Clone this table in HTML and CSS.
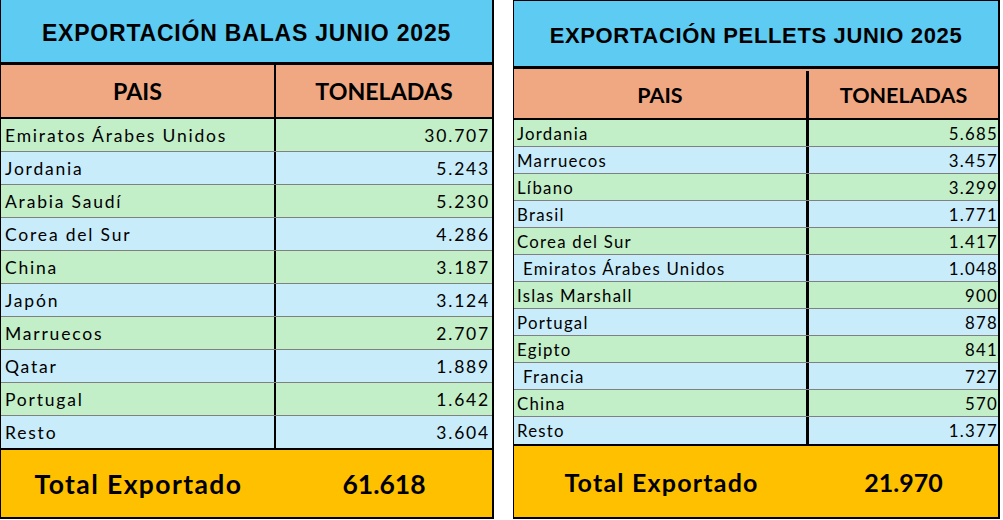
FILE: index.html
```html
<!DOCTYPE html>
<html lang="es">
<head>
<meta charset="utf-8">
<title>Exportación Junio 2025</title>
<link rel="stylesheet" href="styles.css">
</head>
<body>
<div class="page">
  <section class="sheet sheet-balas">
    <div class="title">EXPORTACIÓN BALAS JUNIO 2025</div>
    <div class="head">
      <div class="cell c1">PAIS</div>
      <div class="cell c2">TONELADAS</div>
    </div>
    <div class="body">
      <div class="row g"><div class="cell c1">Emiratos Árabes Unidos</div><div class="cell c2">30.707</div></div>
      <div class="row b"><div class="cell c1">Jordania</div><div class="cell c2">5.243</div></div>
      <div class="row g"><div class="cell c1">Arabia Saudí</div><div class="cell c2">5.230</div></div>
      <div class="row b"><div class="cell c1">Corea del Sur</div><div class="cell c2">4.286</div></div>
      <div class="row g"><div class="cell c1">China</div><div class="cell c2">3.187</div></div>
      <div class="row b"><div class="cell c1">Japón</div><div class="cell c2">3.124</div></div>
      <div class="row g"><div class="cell c1">Marruecos</div><div class="cell c2">2.707</div></div>
      <div class="row b"><div class="cell c1">Qatar</div><div class="cell c2">1.889</div></div>
      <div class="row g"><div class="cell c1">Portugal</div><div class="cell c2">1.642</div></div>
      <div class="row b"><div class="cell c1">Resto</div><div class="cell c2">3.604</div></div>
    </div>
    <div class="total">
      <div class="cell c1 label">Total Exportado</div>
      <div class="cell c2">61.618</div>
    </div>
  </section>

  <section class="sheet sheet-pellets">
    <div class="title">EXPORTACIÓN PELLETS JUNIO 2025</div>
    <div class="head">
      <div class="cell c1">PAIS</div>
      <div class="cell c2">TONELADAS</div>
    </div>
    <div class="body">
      <div class="row g"><div class="cell c1">Jordania</div><div class="cell c2">5.685</div></div>
      <div class="row b"><div class="cell c1">Marruecos</div><div class="cell c2">3.457</div></div>
      <div class="row g"><div class="cell c1">Líbano</div><div class="cell c2">3.299</div></div>
      <div class="row b"><div class="cell c1">Brasil</div><div class="cell c2">1.771</div></div>
      <div class="row g"><div class="cell c1">Corea del Sur</div><div class="cell c2">1.417</div></div>
      <div class="row b"><div class="cell c1 indent">Emiratos Árabes Unidos</div><div class="cell c2">1.048</div></div>
      <div class="row g"><div class="cell c1">Islas Marshall</div><div class="cell c2">900</div></div>
      <div class="row b"><div class="cell c1">Portugal</div><div class="cell c2">878</div></div>
      <div class="row g"><div class="cell c1">Egipto</div><div class="cell c2">841</div></div>
      <div class="row b"><div class="cell c1 indent">Francia</div><div class="cell c2">727</div></div>
      <div class="row g"><div class="cell c1">China</div><div class="cell c2">570</div></div>
      <div class="row b"><div class="cell c1">Resto</div><div class="cell c2">1.377</div></div>
    </div>
    <div class="total">
      <div class="cell c1 label">Total Exportado</div>
      <div class="cell c2">21.970</div>
    </div>
  </section>
</div>
</body>
</html>
```

FILE: styles.css
```css
* { box-sizing: border-box; }

html, body {
  margin: 0;
  padding: 0;
  background: #ffffff;
}

body {
  font-family: Lato, "Open Sans", sans-serif;
  color: #000;
}

.page {
  display: flex;
  gap: 19px;
  align-items: flex-start;
  width: 1003px;
  height: 520px;
}

.sheet {
  display: flex;
  flex-direction: column;
  border-left: 1px solid #000;
  border-right: 2px solid #000;
  border-bottom: 2px solid #000;
}

.sheet-balas { width: 494px; }
.sheet-pellets { width: 487px; border-top: 1px solid #000; }

.title {
  background: #5ecbf3;
  font-family: "Liberation Sans", Arial, sans-serif;
  font-weight: bold;
  display: flex;
  align-items: center;
  justify-content: center;
  border-bottom: 3px solid #000;
}

.sheet-balas .title { height: 65px; font-size: 23px; padding-top: 4px; letter-spacing: 0.8px; }
.sheet-pellets .title { height: 68px; font-size: 22px; padding-top: 4px; letter-spacing: 0.65px; }

.head, .row, .total {
  display: grid;
}

.sheet-balas .head, .sheet-balas .row, .sheet-balas .total { grid-template-columns: 275px 1fr; }
.sheet-pellets .head, .sheet-pellets .row, .sheet-pellets .total { grid-template-columns: 295px 1fr; }

.cell {
  display: flex;
  align-items: center;
  white-space: pre;
}

.head {
  background: #f0a882;
  font-weight: bold;
  border-bottom: 2px solid #000;
}
.head .cell { justify-content: center; }
.sheet-balas .head { height: 54px; font-size: 23.2px; }
.sheet-pellets .head { height: 51px; font-size: 21.5px; padding-top: 2px; }

.sheet-balas .head .c1, .sheet-balas .row .c1 { border-right: 2px solid #000; }
.sheet-pellets .head .c1, .sheet-pellets .row .c1 { border-right: 3px solid #000; }

.row { border-bottom: 1px solid #808080; }
.row:last-child { border-bottom: none; }
.row.g { background: #c2efc8; }
.row.b { background: #c9ecfb; }

.row .c2 { justify-content: flex-end; }

.sheet-balas .row { height: 33px; font-size: 17.5px; letter-spacing: 1.8px; }
.sheet-balas .row:last-child { height: 32px; }
.sheet-balas .row .c1 { padding-left: 4px; }
.sheet-balas .row .c2 { padding-right: 2px; }

.sheet-pellets .row { height: 27px; font-size: 16.8px; letter-spacing: 1.25px; }
.sheet-pellets .row .c1 { padding-left: 3px; }
.sheet-pellets .row .c1.indent { padding-left: 9px; }
.sheet-pellets .row .c2 { padding-right: 0; }

.total {
  background: #ffc000;
  font-weight: bold;
  border-top: 2px solid #000;
}
.total .cell { justify-content: center; }
.sheet-balas .total { height: 69px; font-size: 26.5px; padding-top: 1px; }
.sheet-balas .total .label { letter-spacing: 1.4px; }
.sheet-pellets .total { height: 73px; font-size: 25px; padding-top: 0; }
.sheet-pellets .total .label { letter-spacing: 1.2px; }
```
